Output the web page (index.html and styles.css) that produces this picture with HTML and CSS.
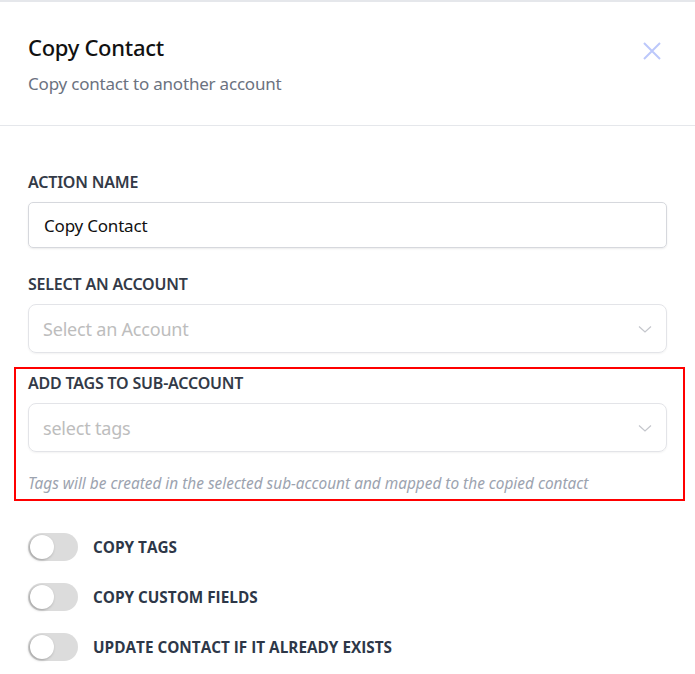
FILE: index.html
```html
<!DOCTYPE html>
<html>
<head>
<meta charset="utf-8">
<link rel="stylesheet" href="styles.css">
</head>
<body>
<div class="panel">
  <header class="head">
    <div class="head-text">
      <h1 class="title">Copy Contact</h1>
      <p class="subtitle">Copy contact to another account</p>
    </div>
    <button class="close" aria-label="Close">
      <svg width="20" height="20" viewBox="0 0 20 20"><path d="M2 2 L18 18 M18 2 L2 18" stroke="#bcc8fb" stroke-width="2" fill="none"/></svg>
    </button>
  </header>
  <main class="body">
    <div class="field">
      <label class="label">ACTION NAME</label>
      <div class="input">Copy Contact</div>
    </div>
    <div class="field">
      <label class="label">SELECT AN ACCOUNT</label>
      <div class="select"><span class="ph">Select an Account</span>
        <svg class="chev" width="14" height="14" viewBox="0 0 14 14"><path d="M1 4.5 L7 10 L13 4.5" stroke="#c4c6cc" stroke-width="1.2" fill="none"/></svg>
      </div>
    </div>
    <div class="field highlight">
      <label class="label">ADD TAGS TO SUB-ACCOUNT</label>
      <div class="select"><span class="ph">select tags</span>
        <svg class="chev" width="14" height="14" viewBox="0 0 14 14"><path d="M1 4.5 L7 10 L13 4.5" stroke="#c4c6cc" stroke-width="1.2" fill="none"/></svg>
      </div>
      <p class="hint">Tags will be created in the selected sub-account and mapped to the copied contact</p>
    </div>
    <div class="toggles">
      <div class="toggle-row"><span class="switch"><span class="knob"></span></span><span class="tlabel">COPY TAGS</span></div>
      <div class="toggle-row"><span class="switch"><span class="knob"></span></span><span class="tlabel">COPY CUSTOM FIELDS</span></div>
      <div class="toggle-row"><span class="switch"><span class="knob"></span></span><span class="tlabel">UPDATE CONTACT IF IT ALREADY EXISTS</span></div>
    </div>
  </main>
</div>
</body>
</html>
```

FILE: styles.css
```css
* { box-sizing: border-box; }
html, body { margin: 0; padding: 0; background: #fff; }
body { font-family: "Noto Sans", "Open Sans", sans-serif; color: #111827; }
.panel { width: 695px; height: 674px; border-top: 2px solid #e5e7eb; }
.head {
  display: flex; justify-content: space-between; align-items: flex-start;
  padding: 30px 28px 0 28px; height: 124px; border-bottom: 1px solid #e5e7eb;
}
.title { margin: 0; font-size: 22px; font-weight: 500; line-height: 30px; color: #111; letter-spacing: -0.3px; }
.subtitle { margin: 10px 0 0; font-size: 17px; line-height: 24px; color: #6b7280; letter-spacing: -0.2px; }
.close { border: 0; background: none; padding: 0; margin: 9px 5px 0 0; width: 20px; height: 20px; }
.close svg { display: block; }
.body { padding: 46px 28px 0 28px; display: flex; flex-direction: column; }
.field { display: flex; flex-direction: column; }
.label { font-size: 16px; font-weight: 600; color: #333a47; line-height: 20px; margin-bottom: 10px; letter-spacing: -0.2px; }
.input {
  height: 46px; border: 1px solid #d6d8dd; border-radius: 5px; padding: 0 15px;
  display: flex; align-items: center; font-size: 17px; color: #111; letter-spacing: -0.2px;
  box-shadow: 0 1px 2px rgba(0,0,0,0.08); margin-bottom: 26px;
}
.select {
  height: 49px; border: 1px solid #e3e4e8; border-radius: 8px; padding: 0 14px;
  display: flex; align-items: center; justify-content: space-between;
  box-shadow: 0 1px 2px rgba(0,0,0,0.05); margin-bottom: 14px;
}
.ph { font-size: 18px; color: #bdbdbd; letter-spacing: -0.2px; }
.highlight {
  margin: 0 -18px 0 -14px; padding: 4px 16px 5px 12px; border: 2px solid #ff0000;
}
.highlight .label { margin-bottom: 10px; }
.highlight .select { margin-bottom: 0; }
.hint { margin: 22px 0 0; font-size: 15.4px; font-style: italic; color: #9ca3af; line-height: 20px; }
.toggles { display: flex; flex-direction: column; gap: 22px; margin-top: 32px; }
.toggle-row { display: flex; align-items: center; gap: 15px; height: 28px; }
.switch { position: relative; width: 50px; height: 28px; border-radius: 14px; background: #dcdcdc; flex: none; }
.knob { position: absolute; left: 2px; top: 2px; width: 24px; height: 24px; border-radius: 50%; background: #fff; box-shadow: -1px 1px 3px rgba(0,0,0,0.3); }
.tlabel { font-family: "Open Sans", sans-serif; font-size: 15.3px; font-weight: 700; color: #2d3748; }
```
